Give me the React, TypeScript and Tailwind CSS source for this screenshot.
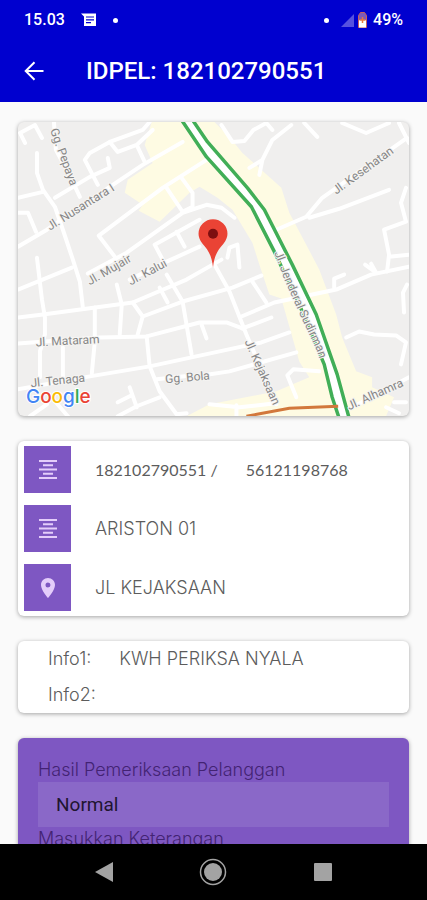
import React from 'react';

const ROADS = [
  'M37 153 L37 173 L43 190 L55 207 L63 230 L73 260 L80 282 L83 308',
  'M37 258 L42 300 L45 318 L45 335 L40 352 L40 378',
  'M18 198 L43 192',
  'M18 247 L47 230 L113 185 L143 165 L183 142',
  'M55 198 L90 177 L110 168 L108 158',
  'M98 185 L85 160 L90 153 L110 142 L143 130 L150 122',
  'M110 142 L118 152 L137 145 L153 130 M137 145 L145 162',
  'M25 143 L20 133 L35 125 L42 138',
  'M54 122 L56 150 L72 180 L80 197',
  'M115 257 L99 236 L163 188 L207 160',
  'M167 188 L183 212 M182 178 L193 193 L193 207 L183 212',
  'M88 274 L127 253 L183 213 L207 205 L222 208 L235 218',
  'M163 260 L155 245 L200 220 M177 232 L185 247',
  'M130 280 L167 262 L200 247',
  'M18 290 L72 268',
  'M18 318 L43 315 L133 303 L187 280 L222 260',
  'M117 285 L122 305 L120 335',
  'M133 303 L143 317 L138 335 M143 317 L183 302 L233 288 L262 276',
  'M95 308 L95 342 L92 374',
  'M18 344 L100 338 L147 337 L200 323 L227 323 L243 329',
  'M147 337 L150 367 L160 392 L177 415 L187 414',
  'M18 390 L90 377 L150 367 L220 352 L262 343 L290 333',
  'M167 275 L183 302 L192 355 M160 288 L168 303',
  'M157 380 L185 377 M204 376 L230 372 L297 353',
  'M118 417 L137 407 L160 398 M130 388 L137 408 M118 403 L132 396',
  'M30 417 L47 405 M55 402 L68 417',
  'M63 348 L63 377',
  'M202 325 L207 339',
  'M215 265 L230 292 L247 335 L277 405',
  'M242 317 L275 303 L337 290 L372 275 L410 267',
  'M253 282 L267 303',
  'M243 329 L272 318',
  'M297 398 L288 376 L294 370 L320 372',
  'M347 338 L360 332 L375 335 L397 336 L407 343 L402 365',
  'M335 288 L335 279 L345 275',
  'M408 285 L404 293 L405 313',
  'M210 405 L240 408 L276 404 M237 406 L237 417',
  'M347 411 L380 394 L410 378',
  'M387 408 L400 414 M395 403 L407 403',
  'M222 125 L233 142 L245 141 L254 130 L267 123 L273 130',
  'M292 125 L273 140 L263 160 L260 175 M250 168 L263 160',
  'M305 123 L318 137',
  'M343 123 L367 133 L390 123',
  'M400 123 L410 143 M408 138 L323 198 L307 217 L277 230',
  'M310 218 L340 209 L390 190',
  'M407 188 L402 203 L407 222 L385 230 L390 255 L388 272 M390 257 L410 255',
  'M366 265 L377 273 L372 264',
  'M228 258 L230 248 L238 245 L240 268',
  'M18 213 L28 213 L36 232',
];

const GOOGLE_LETTERS = [
  { char: 'G', className: 'fill-[#4285f4]' },
  { char: 'o', className: 'fill-[#ea4335]' },
  { char: 'o', className: 'fill-[#fbbc05]' },
  { char: 'g', className: 'fill-[#4285f4]' },
  { char: 'l', className: 'fill-[#34a853]' },
  { char: 'e', className: 'fill-[#ea4335]' },
];

const STREETS = [
  { name: 'Gg. Pepaya', transform: 'translate(50 130) rotate(70)' },
  { name: 'Jl. Nusantara I', transform: 'translate(50 231) rotate(-32)' },
  { name: 'Jl. Kesehatan', transform: 'translate(337 195) rotate(-36)' },
  { name: 'Jl. Mujair', transform: 'translate(90 286) rotate(-30)' },
  { name: 'Jl. Kalui', transform: 'translate(131 286) rotate(-28)' },
  { name: 'Jl. Mataram', transform: 'translate(36 347) rotate(-3)' },
  { name: 'Jl. Tenaga', transform: 'translate(31 388) rotate(-6)' },
  { name: 'Gg. Bola', transform: 'translate(166 384) rotate(-5)' },
  { name: 'Jl. Kejaksaan', transform: 'translate(245 342) rotate(66)' },
  { name: 'Jl. Alhamra', transform: 'translate(350 411) rotate(-24)' },
];

const CenterLines: React.FC = () => (
  <svg viewBox="0 0 18 19" className="h-[19px] w-[18px]" fill="none" stroke="currentColor" strokeWidth="2">
    <path d="M0 1h18M4 5.300h10M0 9.500h18M4 13.700h10M0 18h18" />
  </svg>
);

const PlaceMark: React.FC = () => (
  <svg viewBox="5 2 14 20" className="h-5 w-[14px]" fill="currentColor">
    <path d="M12 2C8.100 2 5 5.100 5 9c0 5.300 7 13 7 13s7-7.700 7-13c0-3.900-3.100-7-7-7zm0 9.500a2.500 2.500 0 1 1 0-5 2.500 2.500 0 0 1 0 5z" />
  </svg>
);

const DETAILS = [
  { id: 'meter', icon: <CenterLines />, value: '182102790551 /', extra: '56121198768' },
  { id: 'name', icon: <CenterLines />, value: 'ARISTON 01' },
  { id: 'address', icon: <PlaceMark />, value: 'JL KEJAKSAAN' },
];

const StatusBar: React.FC = () => (
  <div className="flex h-10 items-center px-6 text-base font-medium">
    <span>15.03</span>
    <svg viewBox="0 0 16 14" className="ml-4 h-[14px] w-4">
      <path d="M0 0.500h15v12.500H3V3.500z" fill="#fff" />
      <path d="M5 4h8M5 6.800h8M5 9.600h5" stroke="#0000cf" strokeWidth="1.200" />
    </svg>
    <span className="ml-4 h-[5px] w-[5px] rounded-full bg-white" />
    <span className="ml-auto h-[5px] w-[5px] rounded-full bg-white" />
    <svg viewBox="0 0 28 18" className="ml-3 h-[18px] w-7">
      <path d="M0 16L13 3v13z" fill="#5550e0" />
      <path d="M17.500 16.500V4.500L19.500 1.500h4L25.500 4.500v12z" fill="#7d5ab8" stroke="#c8605f" />
      <path d="M18 9h7v7.500h-7z" fill="#fff" />
      <path d="M21.500 6v6M18.500 9h6" stroke="#e8793f" strokeWidth="1.500" />
    </svg>
    <span className="ml-1">49%</span>
  </div>
);

const StreetMap: React.FC = () => (
  <section className="overflow-hidden rounded-md bg-[#f0efee] shadow-[0_1px_4px_rgba(0,0,0,0.35)]">
    <svg viewBox="18 122 392 295" className="block h-auto w-full" role="img" aria-label="Map">
      <path
        d="M152 122H215L230 137L243 153L282 188L290 213L307 245L320 270L337 315L343 338L357 372L373 378L373 388L395 398L387 417H187L210 405L277 392L310 378L300 362L282 299L270 295L260 265L253 243L233 210L218 198L200 187L190 193L160 222L139 211L143 205L125 193L128 180L153 163L145 145z"
        fill="#fefbe3"
      />
      <g fill="none" stroke="#fff" strokeWidth="4" strokeLinejoin="round" strokeLinecap="round">
        {ROADS.map((d) => (
          <path key={d} d={d} />
        ))}
      </g>
      <path
        d="M188 120L208 150L215 158L250 198L260 212L286 262L305 299L331 370L338 397L345 419"
        fill="none"
        stroke="#fff"
        strokeWidth="9"
      />
      <g fill="none" stroke="#41ae57" strokeWidth="3.500" strokeLinejoin="round">
        <path d="M182 120L207 157L252 207L275 252L300 305L325 365L333 398L340 419" />
        <path d="M193 120L208 142L248 188L265 210L293 265L317 315L338 375L350 419" />
      </g>
      <path d="M247 417L290 409L339 407" fill="none" stroke="#d2783c" strokeWidth="3" />
      <path id="sudirman" d="M275 253L285 280L301 316L318 352L328 385" fill="none" />
      <g
        className="fill-[#868686] font-['Roboto',sans-serif] text-[12px]"
        stroke="#f5f4f2"
        strokeWidth="2"
        paintOrder="stroke"
      >
        {STREETS.map((street) => (
          <text key={street.name} transform={street.transform}>
            {street.name}
          </text>
        ))}
        <text>
          <textPath href="#sudirman">Jl. Jenderal Sudirman</textPath>
        </text>
      </g>
      <text
        x="26"
        y="404"
        className="font-['Inter',sans-serif] text-[19px] font-medium"
        stroke="#fff"
        strokeWidth="2"
        paintOrder="stroke"
      >
        {GOOGLE_LETTERS.map((letter, i) => (
          <tspan key={i} className={letter.className}>
            {letter.char}
          </tspan>
        ))}
      </text>
      <path
        d="M213.500 268C212 254 208 250 203 244C200 240 199 237 199 234A14.500 14.500 0 0 1 228 234C228 237 227 240 224 244C219 250 215 254 213.500 268z"
        fill="#ea4335"
      />
      <circle cx="213.500" cy="234" r="5" fill="#7d0f10" />
    </svg>
  </section>
);

const App: React.FC = () => {
  return (
    <div className="flex h-screen flex-col overflow-hidden bg-[#fafafa] font-['Inter',sans-serif] text-[#5c5c5c]">
      <header className="shrink-0 bg-[#0000cf] font-['Roboto',sans-serif] text-white">
        <StatusBar />
        <div className="flex h-[62px] items-center pl-6">
          <button type="button" aria-label="Back" className="w-[62px]">
            <svg viewBox="0 0 20 20" className="h-5 w-5" fill="none" stroke="currentColor" strokeWidth="2">
              <path d="M19.500 10H2M10.500 1.200L1.700 10l8.800 8.800" />
            </svg>
          </button>
          <h1 className="text-2xl font-medium">IDPEL: 182102790551</h1>
        </div>
      </header>

      <main className="flex min-h-0 flex-1 flex-col gap-[25px] overflow-hidden px-[18px] pt-5 *:shrink-0">
        <StreetMap />

        <section className="flex flex-col gap-3 rounded-md bg-white px-[6px] py-[5px] shadow-[0_1px_4px_rgba(0,0,0,0.35)]">
          {DETAILS.map((item) => (
            <div key={item.id} className="flex items-center">
              <div className="flex h-[47px] w-[47px] items-center justify-center bg-[#7e57c2] text-[#e4cdfa]">
                {item.icon}
              </div>
              {item.extra ? (
                <p className="ml-6 flex gap-7 font-['Lato',sans-serif] text-base">
                  <span>{item.value}</span>
                  <span>{item.extra}</span>
                </p>
              ) : (
                <p className="ml-6 text-lg font-light">{item.value}</p>
              )}
            </div>
          ))}
        </section>

        <section className="rounded-md bg-white px-[30px] text-lg font-light shadow-[0_1px_4px_rgba(0,0,0,0.35)]">
          <div className="flex h-9 items-center gap-7">
            <span>Info1:</span>
            <span>KWH PERIKSA NYALA</span>
          </div>
          <div className="flex h-9 items-center">
            <span>Info2:</span>
          </div>
        </section>

        <form className="flex flex-col rounded-md bg-[#7e57c2] px-5 pt-5 pb-6 text-lg text-[#432373] shadow-[0_1px_4px_rgba(0,0,0,0.35)]">
          <label htmlFor="result" className="leading-6 font-light">
            Hasil Pemeriksaan Pelanggan
          </label>
          <select
            id="result"
            className="h-[45px] appearance-none bg-[#8a68c8] px-[18px] font-['Roboto',sans-serif] text-[19px] text-[#1f1530]"
          >
            <option>Normal</option>
          </select>
          <label htmlFor="note" className="leading-6 font-light">
            Masukkan Keterangan
          </label>
          <input id="note" type="text" className="h-[45px] bg-[#8a68c8] px-[18px]" />
        </form>
      </main>

      <nav className="flex h-14 shrink-0 items-center justify-around bg-black px-[52px] text-[#a3a3a3]">
        <button type="button" aria-label="Back">
          <svg viewBox="0 0 18 20" className="h-5 w-[18px]" fill="currentColor">
            <path d="M0 10L18 0v20z" />
          </svg>
        </button>
        <button type="button" aria-label="Home">
          <svg viewBox="0 0 28 28" className="h-7 w-7">
            <circle cx="14" cy="14" r="12.500" fill="none" stroke="currentColor" strokeWidth="1.500" />
            <circle cx="14" cy="14" r="9" fill="currentColor" />
          </svg>
        </button>
        <button type="button" aria-label="Recent apps">
          <svg viewBox="0 0 18 18" className="h-[18px] w-[18px]" fill="currentColor">
            <rect width="18" height="18" rx="1" />
          </svg>
        </button>
      </nav>
    </div>
  );
};

export default App;
